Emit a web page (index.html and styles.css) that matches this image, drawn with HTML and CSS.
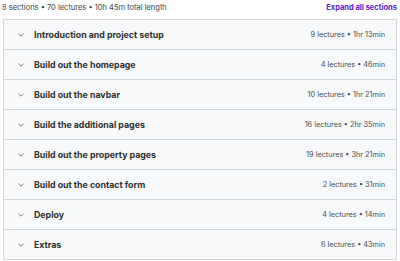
FILE: index.html
```html
<!DOCTYPE html>
<html>
<head>
<meta charset="utf-8">
<link rel="stylesheet" href="styles.css">
</head>
<body>
<div class="page">
  <div class="top">
    <span class="summary">8 sections • 70 lectures • 10h 45m total length</span>
    <span class="expand">Expand all sections</span>
  </div>
  <div class="list">
    <div class="row"><svg class="chev" viewBox="0 0 6 4"><path d="M0.5 0.8 L3 3.2 L5.5 0.8"/></svg><span class="title">Introduction and project setup</span><span class="meta">9 lectures • 1hr 13min</span></div>
    <div class="row"><svg class="chev" viewBox="0 0 6 4"><path d="M0.5 0.8 L3 3.2 L5.5 0.8"/></svg><span class="title">Build out the homepage</span><span class="meta">4 lectures • 46min</span></div>
    <div class="row"><svg class="chev" viewBox="0 0 6 4"><path d="M0.5 0.8 L3 3.2 L5.5 0.8"/></svg><span class="title">Build out the navbar</span><span class="meta">10 lectures • 1hr 21min</span></div>
    <div class="row"><svg class="chev" viewBox="0 0 6 4"><path d="M0.5 0.8 L3 3.2 L5.5 0.8"/></svg><span class="title">Build the additional pages</span><span class="meta">16 lectures • 2hr 35min</span></div>
    <div class="row"><svg class="chev" viewBox="0 0 6 4"><path d="M0.5 0.8 L3 3.2 L5.5 0.8"/></svg><span class="title">Build out the property pages</span><span class="meta">19 lectures • 3hr 21min</span></div>
    <div class="row"><svg class="chev" viewBox="0 0 6 4"><path d="M0.5 0.8 L3 3.2 L5.5 0.8"/></svg><span class="title">Build out the contact form</span><span class="meta">2 lectures • 31min</span></div>
    <div class="row"><svg class="chev" viewBox="0 0 6 4"><path d="M0.5 0.8 L3 3.2 L5.5 0.8"/></svg><span class="title">Deploy</span><span class="meta">4 lectures • 14min</span></div>
    <div class="row"><svg class="chev" viewBox="0 0 6 4"><path d="M0.5 0.8 L3 3.2 L5.5 0.8"/></svg><span class="title">Extras</span><span class="meta">6 lectures • 43min</span></div>
  </div>
</div>
</body>
</html>
```
FILE: styles.css
```css
* { box-sizing: border-box; }
html, body { margin: 0; padding: 0; background: #fff; }
body { font-family: Inter, "Noto Sans", sans-serif; color: #2d2f31; }
.page { width: 400px; padding: 0 3px 0 3px; }
.top {
  height: 19px;
  display: flex;
  justify-content: space-between;
  align-items: center;
  padding-bottom: 5px;
  margin-left: -1px;
}
.summary { font-size: 7.5px; color: #3e4143; }
.expand { font-size: 7.5px; font-weight: 700; color: #5624d0; }
.list { border: 1px solid #d1d7dc; border-bottom: none; }
.row {
  height: 30px;
  display: flex;
  align-items: center;
  background: #f7f9fa;
  border-bottom: 1px solid #d1d7dc;
  padding: 0 11px 0 14px;
}
.chev { width: 6px; height: 4px; fill: none; stroke: #6a6f73; stroke-width: 0.9; margin-right: 10px; }
.title { font-size: 8.8px; font-weight: 700; flex: 1; color: #2d2f31; }
.meta { font-size: 7.3px; color: #4a4d50; }
```
